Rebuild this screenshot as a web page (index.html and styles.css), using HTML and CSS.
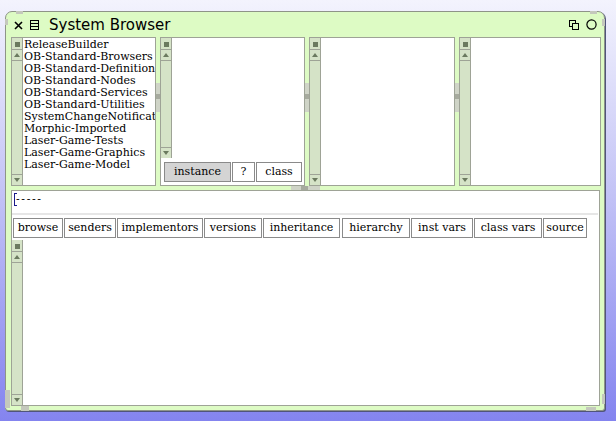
FILE: index.html
```html
<!DOCTYPE html>
<html>
<head>
<meta charset="utf-8">
<link rel="stylesheet" href="styles.css">
</head>
<body>
<div class="window">
  <div class="grip g-tl1"></div><div class="grip g-tl2"></div>
  <div class="grip g-tr1"></div><div class="grip g-tr2"></div>
  <div class="grip g-bl1"></div><div class="grip g-bl2"></div>
  <div class="grip g-br1"></div><div class="grip g-br2"></div>
  <div class="titlebar">
    <svg class="ticon close" width="9" height="9" viewBox="0 0 9 9"><path d="M1 1 L8 8 M8 1 L1 8" stroke="#000" stroke-width="1.6" fill="none"/></svg>
    <svg class="ticon menu" width="9" height="10" viewBox="0 0 9 10"><rect x="0.5" y="0.5" width="8" height="9" fill="none" stroke="#000" stroke-width="1"/><path d="M0 3.5 H9 M0 6.5 H9" stroke="#000" stroke-width="1"/></svg>
    <span class="title">System Browser</span>
    <span class="spacer"></span>
    <svg class="ticon coll" width="10" height="10" viewBox="0 0 10 10"><rect x="0.5" y="0.5" width="6" height="6" fill="none" stroke="#000"/><rect x="3.5" y="3.5" width="6" height="6" fill="#dcfac2" stroke="#000"/></svg>
    <svg class="ticon circ" width="11" height="11" viewBox="0 0 11 11"><circle cx="5.5" cy="5.5" r="4.6" fill="none" stroke="#000" stroke-width="1.2"/></svg>
  </div>
  <div class="toprow">
    <div class="pane w1">
      <div class="sbar">
        <div class="sb-menu"><span></span></div>
        <div class="sb-btn"><span class="up"></span></div>
        <div class="sb-track"></div>
        <div class="sb-btn"><span class="down"></span></div>
      </div>
      <div class="list">
        <div>ReleaseBuilder</div>
        <div>OB-Standard-Browsers</div>
        <div>OB-Standard-Definition</div>
        <div>OB-Standard-Nodes</div>
        <div>OB-Standard-Services</div>
        <div>OB-Standard-Utilities</div>
        <div>SystemChangeNotificat</div>
        <div>Morphic-Imported</div>
        <div>Laser-Game-Tests</div>
        <div>Laser-Game-Graphics</div>
        <div>Laser-Game-Model</div>
      </div>
    </div>
    <div class="vsplit"><span></span></div>
    <div class="pane pane-col w2">
      <div class="pane-top">
        <div class="sbar">
          <div class="sb-menu"><span></span></div>
          <div class="sb-btn"><span class="up"></span></div>
          <div class="sb-track"></div>
          <div class="sb-btn"><span class="down"></span></div>
        </div>
        <div class="list"></div>
      </div>
      <div class="switches">
        <div class="sw sw-inst on">instance</div>
        <div class="sw sw-q">?</div>
        <div class="sw sw-class">class</div>
      </div>
    </div>
    <div class="vsplit"><span></span></div>
    <div class="pane w3">
      <div class="sbar">
        <div class="sb-menu"><span></span></div>
        <div class="sb-btn"><span class="up"></span></div>
        <div class="sb-track"></div>
        <div class="sb-btn"><span class="down"></span></div>
      </div>
      <div class="list"></div>
    </div>
    <div class="vsplit"><span></span></div>
    <div class="pane w4">
      <div class="sbar">
        <div class="sb-menu"><span></span></div>
        <div class="sb-btn"><span class="up"></span></div>
        <div class="sb-track"></div>
        <div class="sb-btn"><span class="down"></span></div>
      </div>
      <div class="list"></div>
    </div>
  </div>
  <div class="hsplit"><span class="hs-a"></span><span class="hs-b"></span><span class="hs-c"></span></div>
  <div class="lower">
    <div class="annot"><span class="cursor"></span><span class="dashes">-----</span></div>
    <div class="sep"></div>
    <div class="btnrow">
      <div class="btn b-browse">browse</div>
      <div class="btn b-senders">senders</div>
      <div class="btn b-impl">implementors</div>
      <div class="btn b-vers">versions</div>
      <div class="btn b-inh">inheritance</div>
      <div class="btn b-hier">hierarchy</div>
      <div class="btn b-inst">inst vars</div>
      <div class="btn b-cvars">class vars</div>
      <div class="btn b-src">source</div>
    </div>
    <div class="code">
      <div class="sbar">
        <div class="sb-menu"><span></span></div>
        <div class="sb-btn"><span class="up"></span></div>
        <div class="sb-track"></div>
        <div class="sb-btn"><span class="down"></span></div>
      </div>
      <div class="codetext"></div>
    </div>
  </div>
</div>
</body>
</html>
```
FILE: styles.css
```css
* { box-sizing: border-box; }
html, body { margin: 0; padding: 0; }
body {
  width: 616px;
  height: 421px;
  overflow: hidden;
  background: linear-gradient(to bottom, #f3f3fd 0%, #c4c4f6 45%, #8484ef 100%);
  font-family: "DejaVu Serif", serif;
}
.window {
  position: relative;
  margin: 11px 0 0 5px;
  width: 600px;
  height: 400px;
  background: #ddfbc4;
  border: 1px solid #8e9488;
  border-radius: 7px 7px 3px 3px;
  box-shadow: 1px 1px 0 #50557a;
  padding: 0 3px 0 5px;
  display: flex;
  flex-direction: column;
}
.grip { position: absolute; background: #c4c8bc; }
.g-tl1 { left: 10px; top: -1px; width: 7px; height: 3px; }
.g-tl2 { left: -1px; top: 7px; width: 3px; height: 6px; }
.g-tr1 { right: 7px; top: -1px; width: 7px; height: 3px; }
.g-tr2 { right: -1px; top: 7px; width: 3px; height: 7px; }
.g-bl1 { left: -1px; bottom: 2px; width: 5px; height: 18px; }
.g-bl2 { left: 15px; bottom: -1px; width: 8px; height: 5px; }
.g-br1 { right: -1px; bottom: 6px; width: 3px; height: 10px; }
.g-br2 { right: 8px; bottom: -1px; width: 10px; height: 4px; }

.titlebar {
  height: 25px;
  display: flex;
  align-items: center;
  padding-left: 3px;
  padding-right: 4px;
}
.ticon { display: block; flex: none; }
.close { margin-top: 1px; }
.menu { margin-left: 7px; }
.title {
  font-family: "DejaVu Sans", sans-serif;
  font-size: 15px;
  color: #000;
  margin-left: 10px;
  margin-top: 1px;
}
.spacer { flex: 1; }
.coll { margin-right: 7px; }
.circ { margin-right: 0; }

.toprow {
  height: 149px;
  display: flex;
}
.pane {
  background: #fff;
  border: 1px solid #9ea396;
  display: flex;
  height: 100%;
}
.w1 { width: 145px; }
.w2 { width: 145px; }
.w3 { width: 146px; }
.w4 { width: 142px; }
.pane-col { flex-direction: column; }
.pane-top { display: flex; height: 120px; }
.vsplit {
  width: 4px;
  display: flex;
  flex-direction: column;
  justify-content: center;
}
.vsplit span {
  display: block;
  height: 29px;
  margin-top: -29px;
  background: linear-gradient(to bottom, #cfd4c7 0, #cfd4c7 11px, #a6aa9e 11px, #a6aa9e 16px, #cfd4c7 16px);
}
.hsplit {
  height: 4px;
  display: flex;
  padding-left: 280px;
}
.hs-a { width: 10px; background: #cfd4c7; }
.hs-b { width: 7px; background: #a6aa9e; }
.hs-c { width: 12px; background: #cfd4c7; }

.sbar {
  width: 11px;
  flex: none;
  background: #d5e3c7;
  border-right: 1px solid #9ea396;
  display: flex;
  flex-direction: column;
}
.sb-menu, .sb-btn {
  height: 11px;
  flex: none;
  border-bottom: 1px solid #9ea396;
  display: flex;
  align-items: center;
  justify-content: center;
}
.sb-menu { height: 12px; padding-top: 1px; }
.sb-menu span { width: 5px; height: 5px; background: #6b7a5f; display: block; }
.sb-btn .up, .sb-btn .down { width: 0; height: 0; border-left: 3px solid transparent; border-right: 3px solid transparent; display: block; }
.sb-btn .up { border-bottom: 4px solid #6b7a5f; }
.sb-btn .down { border-top: 4px solid #6b7a5f; }
.sb-track { flex: 1; border-bottom: 1px solid #9ea396; }
.sbar > .sb-btn:last-child { border-bottom: none; height: 10px; }

.list {
  flex: 1;
  min-width: 0;
  overflow: hidden;
  padding: 1px 0 0 1px;
  font-size: 11px;
  line-height: 12px;
  color: #000;
  white-space: nowrap;
}

.switches {
  flex: 1;
  display: flex;
  align-items: flex-start;
  padding: 4px 0 0 3px;
  gap: 1px;
}
.sw {
  height: 20px;
  border: 1px solid #8a8a8a;
  background: #fff;
  font-size: 11px;
  line-height: 18px;
  text-align: center;
}
.sw.on { background: #d4d4d4; }
.sw-inst { width: 67px; }
.sw-q { width: 23px; }
.sw-class { width: 46px; }

.lower {
  margin-top: 0;
  width: 589px;
  height: 216px;
  background: #fff;
  border: 1px solid #9ea396;
  display: flex;
  flex-direction: column;
}
.annot {
  height: 22px;
  display: flex;
  align-items: flex-start;
  padding: 2px 0 0 2px;
  font-size: 11px;
  line-height: 14px;
}
.cursor {
  width: 3px;
  height: 13px;
  border-left: 1px solid #1a1a8a;
  border-top: 1px solid #1a1a8a;
  border-bottom: 1px solid #1a1a8a;
}
.dashes { margin-left: -1px; letter-spacing: 1.6px; }
.sep {
  height: 2px;
  background: #e6e6e6;
  margin-right: 1px;
}
.btnrow {
  display: flex;
  padding: 3px 0 0 1px;
  height: 25px;
  gap: 1px;
}
.btn {
  height: 20px;
  border: 1px solid #8a8a8a;
  background: #fff;
  font-size: 11px;
  line-height: 18px;
  text-align: center;
  white-space: nowrap;
  overflow: hidden;
}
.b-browse { width: 50px; }
.b-senders { width: 52px; }
.b-impl { width: 86px; }
.b-vers { width: 58px; }
.b-inh { width: 77px; }
.b-hier { width: 68px; margin-left: 1px; }
.b-inst { width: 62px; }
.b-cvars { width: 68px; }
.b-src { width: 44px; }
.code {
  flex: 1;
  display: flex;
  min-height: 0;
}
.codetext { flex: 1; }
```
